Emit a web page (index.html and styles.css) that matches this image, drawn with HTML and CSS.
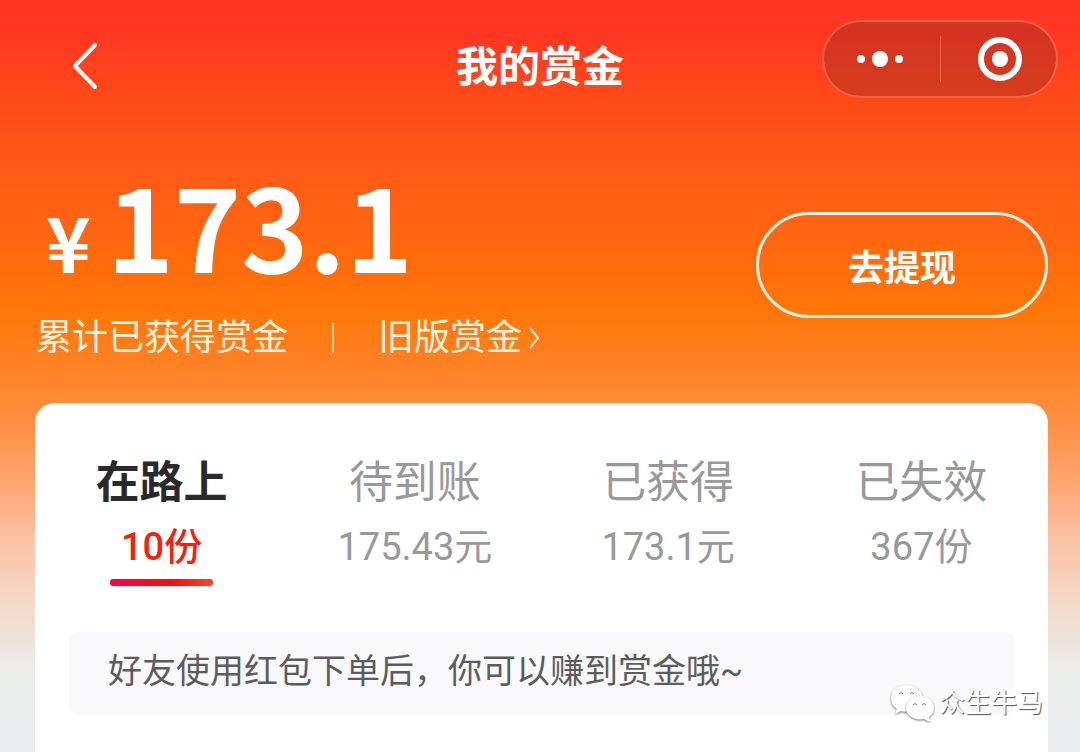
FILE: index.html
```html
<!DOCTYPE html>
<html lang="zh-CN">
<head>
    <meta charset="UTF-8">
    <meta name="viewport" content="width=device-width, initial-scale=1.0">
    <title>我的赏金</title>
    <link rel="stylesheet" href="styles.css">
</head>
<body>
    <header class="header">
        <button class="back" aria-label="返回">
            <svg width="28" height="48" viewBox="0 0 28 48" fill="none" stroke="#fff" stroke-width="4" stroke-linecap="round" stroke-linejoin="round">
                <path d="M24 3L4 24l20 21"/>
            </svg>
        </button>
        <h1 class="title">我的赏金</h1>
        <div class="capsule">
            <button class="capsule-btn more" aria-label="更多">
                <svg width="48" height="48" viewBox="0 0 48 48" fill="#fff">
                    <circle cx="5" cy="24" r="4"/>
                    <circle cx="24" cy="24" r="8"/>
                    <circle cx="43" cy="24" r="4"/>
                </svg>
            </button>
            <button class="capsule-btn close" aria-label="关闭">
                <svg width="48" height="48" viewBox="0 0 48 48">
                    <circle cx="24" cy="24" r="19" fill="none" stroke="#fff" stroke-width="6"/>
                    <circle cx="24" cy="24" r="8" fill="#fff"/>
                </svg>
            </button>
        </div>
    </header>

    <section class="summary">
        <div class="balance">
            <div class="amount"><span class="yen">¥</span>173.1</div>
            <div class="links">
                <span>累计已获得赏金</span>
                <span class="line"></span>
                <a class="old" href="#">旧版赏金<svg width="12" height="26" viewBox="0 0 12 26" fill="none" stroke="#fff3df" stroke-width="2"><path d="M2 3l8 10-8 10"/></svg></a>
            </div>
        </div>
        <button class="withdraw">去提现</button>
    </section>

    <main class="card">
        <nav class="tabs">
            <button class="tab active">
                <span class="name">在路上</span>
                <span class="count">10份</span>
            </button>
            <button class="tab">
                <span class="name">待到账</span>
                <span class="count">175.43元</span>
            </button>
            <button class="tab">
                <span class="name">已获得</span>
                <span class="count">173.1元</span>
            </button>
            <button class="tab">
                <span class="name">已失效</span>
                <span class="count">367份</span>
            </button>
        </nav>
        <p class="notice">好友使用红包下单后，你可以赚到赏金哦~</p>
        <div class="watermark">
            <svg width="46" height="40" viewBox="0 0 46 40">
                <g class="bubble">
                    <path d="M17 2C8 2 2 8 2 15c0 5 2 8 6 11l-2 5 6-3c10 3 22-2 22-13C34 8 26 2 17 2z"/>
                </g>
                <g class="bubble">
                    <path d="M31 13c-8 0-14 5-14 12 0 8 9 13 18 11l6 3-1-5c3-2 5-5 5-9 0-7-6-12-14-12z"/>
                </g>
                <path d="M10 11q2-3 4 0M21 11q2-3 4 0M24 22q2-3 4 0M33 22q2-3 4 0" fill="none" stroke="#777"/>
            </svg>
            <span>众生牛马</span>
        </div>
    </main>
</body>
</html>
```

FILE: styles.css
```css
* {
    box-sizing: border-box;
}
body {
    margin: 0;
    min-height: 100vh;
    display: flex;
    flex-direction: column;
    background: #ececee linear-gradient(#ff3524 0, #ff3822 36px, #ff4a17 100px, #ff5a18 170px, #ff6710 240px, #ff7607 310px, #ff842a 375px, #ff9248 430px, #ffa878 490px, #fac2a6 540px, #f6d5c0 590px, #eee4dd 640px, #ebedeb 670px, #ececee 752px) no-repeat;
    font-family: Roboto, "Noto Sans CJK SC", sans-serif;
    color: #fff;
}
button {
    border: none;
    padding: 0;
    background: none;
    color: inherit;
    font-family: inherit;
    cursor: pointer;
}
.header {
    display: grid;
    grid-template-columns: 1fr auto 1fr;
    padding: 20px 22px 0;
}
.back {
    justify-self: start;
    align-self: end;
    display: flex;
    align-items: center;
    height: 64px;
    margin-left: 49px;
}
.title {
    align-self: end;
    margin: 0;
    font-size: 42px;
    line-height: 60px;
    font-weight: bold;
}
.capsule {
    justify-self: end;
    display: flex;
    align-items: center;
    width: 236px;
    height: 78px;
    border: 2px solid rgba(255, 130, 100, 0.6);
    border-radius: 39px;
    background: rgba(150, 45, 35, 0.4);
}
.capsule-btn {
    flex: 1;
    display: flex;
    justify-content: center;
    align-items: center;
    height: 46px;
}
.more {
    padding-right: 4px;
}
.close {
    padding-left: 4px;
    border-left: 1px solid rgba(255, 130, 100, 0.6);
}
.summary {
    display: flex;
    justify-content: space-between;
    align-items: center;
    padding: 70px 32px 41px 36px;
}
.balance {
    display: flex;
    flex-direction: column;
    gap: 34px;
}
.amount {
    padding-left: 10px;
    font-family: "Noto Sans CJK SC", sans-serif;
    font-size: 114px;
    line-height: 112px;
    font-weight: bold;
}
.yen {
    margin-right: 16px;
    font-size: 76px;
    line-height: 0;
}
.links {
    display: flex;
    align-items: center;
    font-size: 36px;
    line-height: 48px;
    color: #fff3df;
}
.line {
    width: 2px;
    height: 30px;
    margin: 0 44px;
    background: #ffc78f;
}
.old {
    display: flex;
    align-items: center;
    gap: 6px;
    color: inherit;
    text-decoration: none;
}
.withdraw {
    width: 292px;
    height: 106px;
    border: 3px solid #fff3e6;
    border-radius: 53px;
    font-size: 36px;
    font-weight: bold;
}
.card {
    flex: 1;
    position: relative;
    margin: 0 32px 0 35px;
    padding-top: 48px;
    border-radius: 20px 20px 0 0;
    background: #fff;
}
.tabs {
    display: grid;
    grid-template-columns: repeat(4, 1fr);
}
.tab {
    display: flex;
    flex-direction: column;
    align-items: center;
    color: #999;
    line-height: 64px;
}
.name {
    font-size: 44px;
}
.count {
    font-size: 38px;
}
.tab::after {
    content: "";
    width: 103px;
    height: 7px;
    border-radius: 3px;
}
.active .name {
    color: #2a2a2c;
    font-weight: bold;
}
.active .count {
    color: #f8200c;
    font-weight: 500;
}
.active::after {
    background: linear-gradient(90deg, #fb0052, #fb0c10 60%, #f8481e);
}
.notice {
    margin: 46px 34px 0;
    padding: 0 39px 4px;
    border-radius: 8px;
    background: #f9f9fb;
    color: #5c5c5c;
    font-size: 34px;
    line-height: 78px;
}
/* account mark over the lower right corner */
.watermark {
    position: absolute;
    right: 5px;
    bottom: 29px;
    display: flex;
    align-items: center;
    gap: 4px;
    font-size: 26px;
    line-height: 40px;
    text-shadow: 1px 1px 1px #555;
}
.bubble {
    fill: #fff;
    filter: drop-shadow(0 1px 1px #777);
}
```
